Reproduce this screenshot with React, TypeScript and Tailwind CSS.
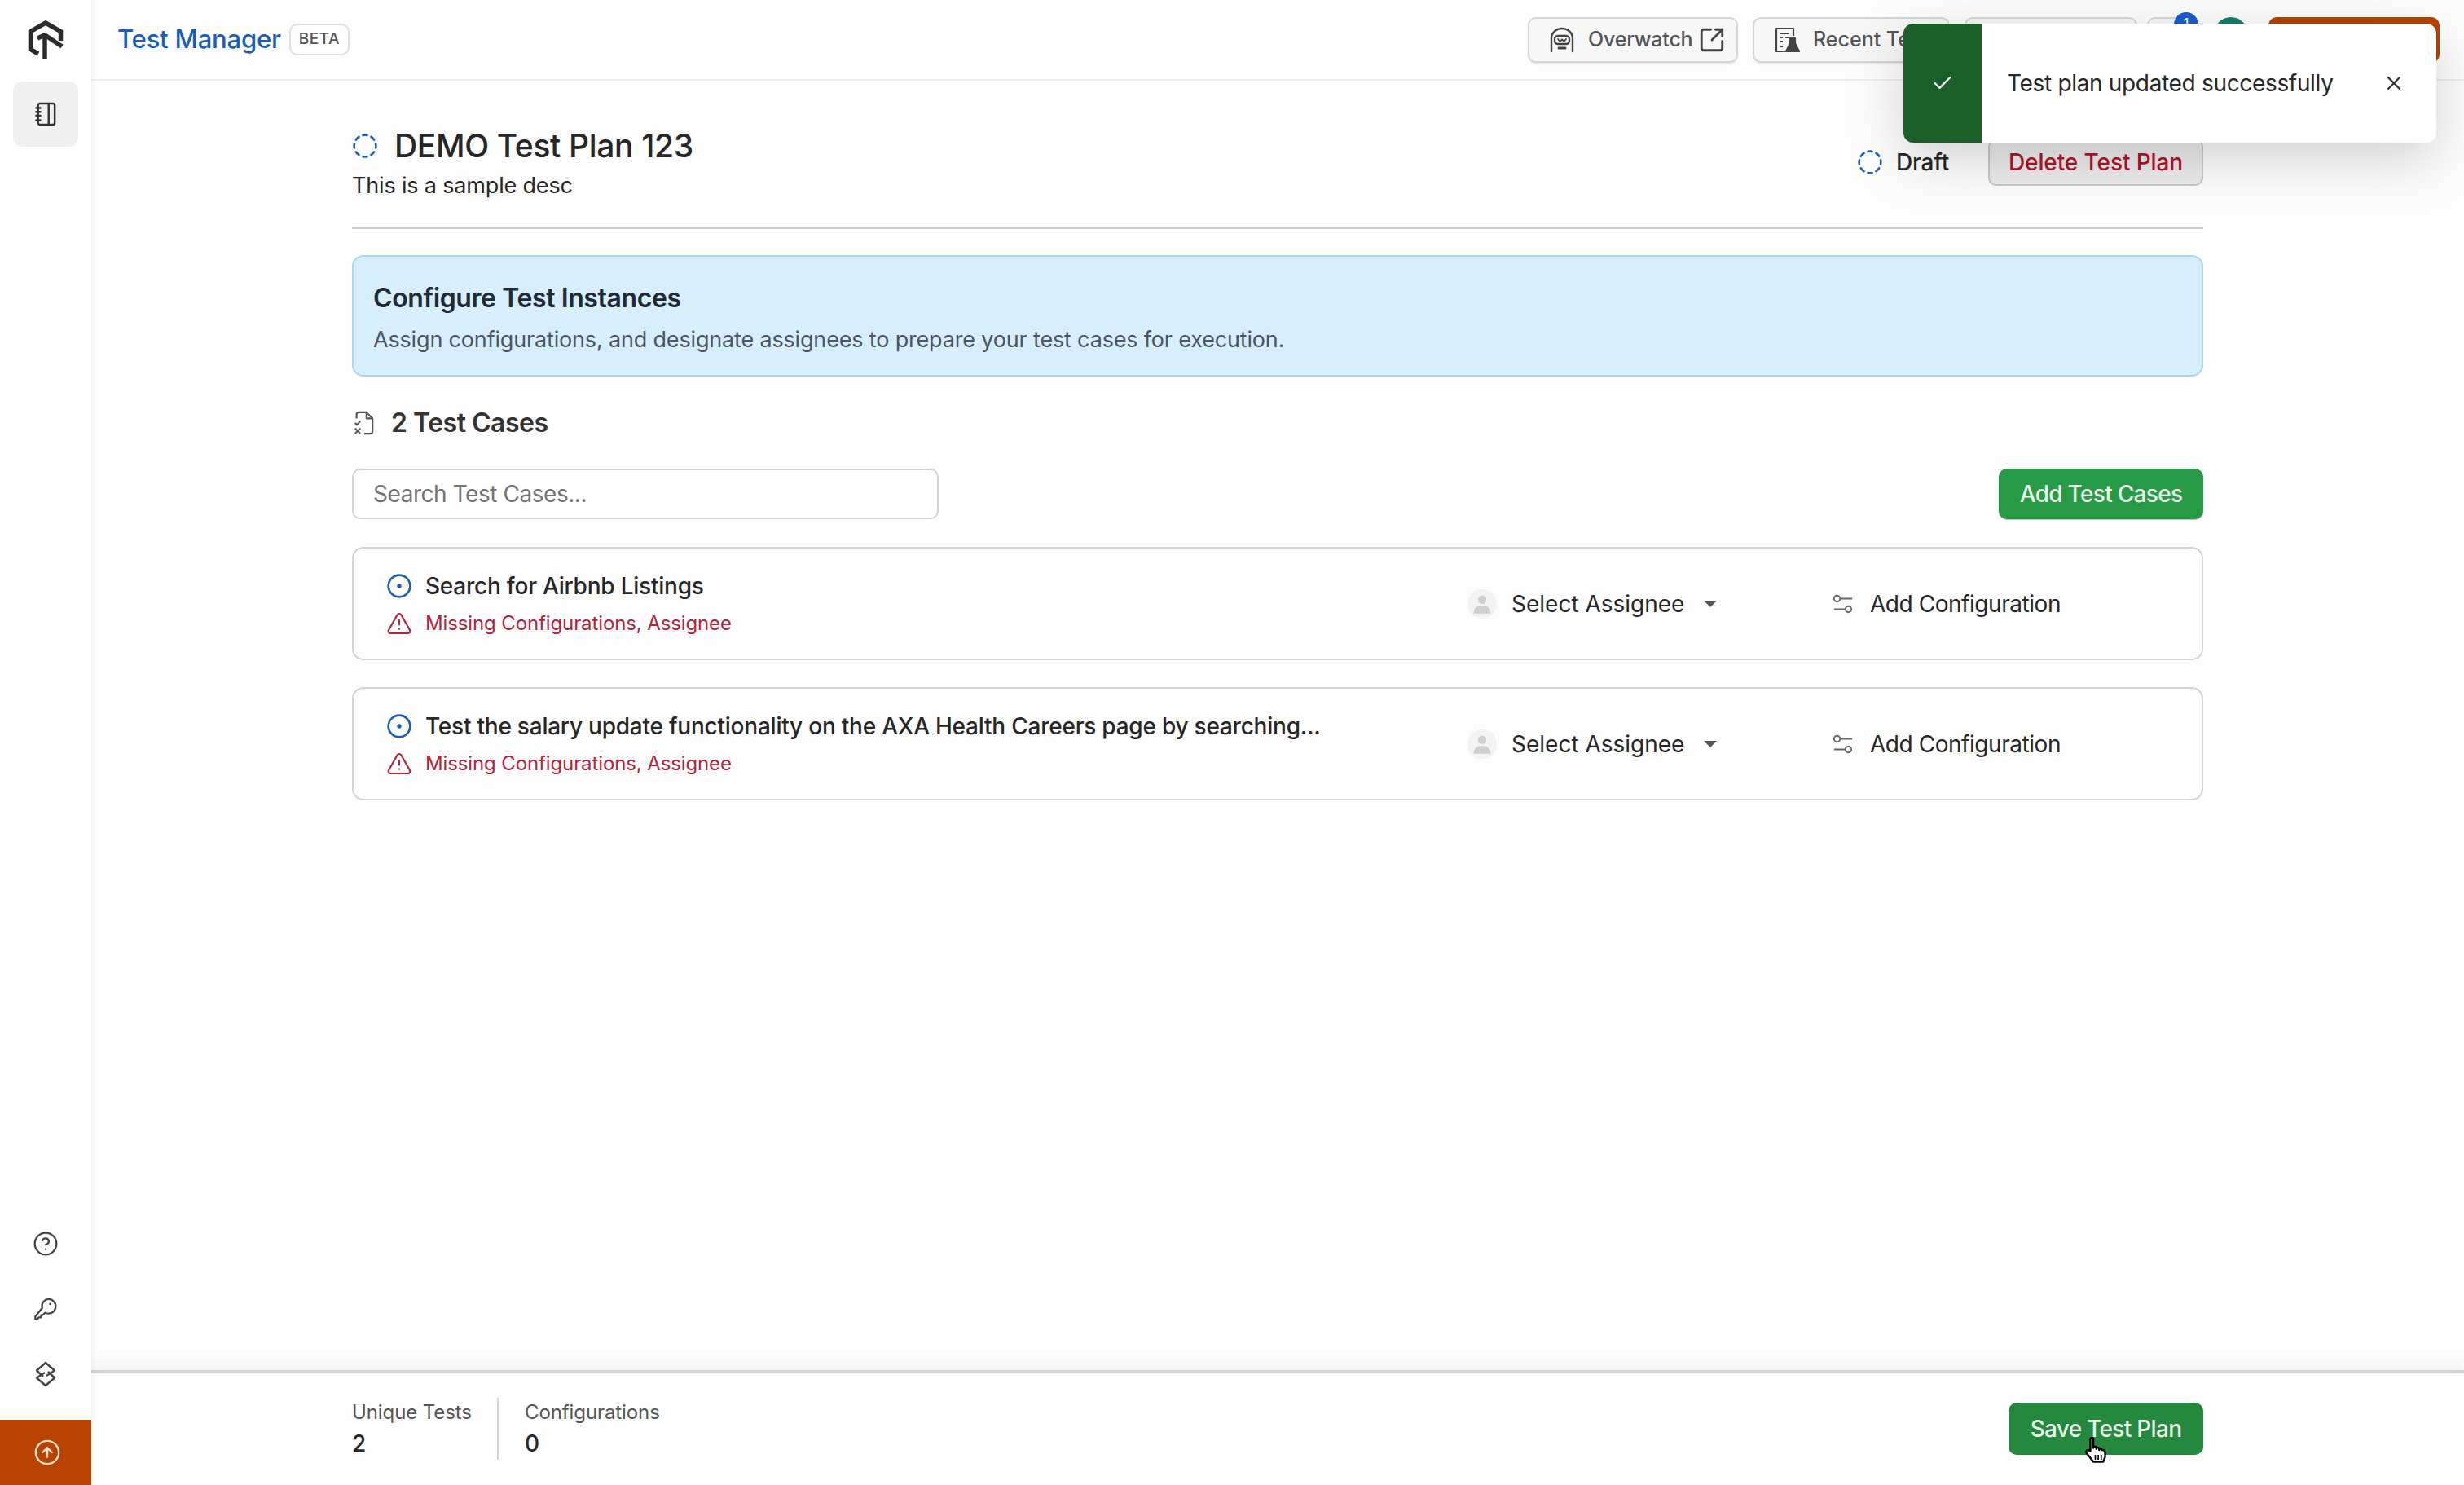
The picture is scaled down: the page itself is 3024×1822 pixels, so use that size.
import { Check, CircleArrowUp, CircleDashed, CircleDot, CircleHelp, SquareArrowOutUpRight, TriangleAlert, X } from 'lucide-react'

const testCases = [
  { id: 1, name: 'Search for Airbnb Listings' },
  { id: 2, name: 'Test the salary update functionality on the AXA Health Careers page by searching...' },
]

function Logo() {
  return (
    <svg viewBox="0 0 44 48" className="h-[48px] w-[44px]" fill="none" stroke="#2b2b2b" strokeWidth="5.5">
      <path d="M13 41 L3.5 35.5 V13.5 L22 3 L40.5 13.5 V25" />
      <path d="M21 47 V20" />
      <path d="M12 22 L21 18 L42 32" />
    </svg>
  )
}

function NotebookIcon() {
  return (
    <svg viewBox="0 0 28 32" className="h-[30px] w-[26px]" fill="none" stroke="#333" strokeWidth="2.6" strokeLinecap="round">
      <rect x="4" y="2" width="22" height="28" rx="2.5" />
      <path d="M18 2 V30" />
      <path d="M1.5 8 H7 M1.5 13 H7 M1.5 18 H7 M1.5 24 H7" />
    </svg>
  )
}

function KeyIcon() {
  return (
    <svg viewBox="0 0 32 32" className="h-[30px] w-[30px]" fill="none" stroke="#444" strokeWidth="2.4" strokeLinejoin="round">
      <path d="M19.5 3 A9.5 9.5 0 1 1 15.5 21 L12 24 H10 V27 H7 L5 29.5 H2.5 V25.5 L11.5 15 A9.5 9.5 0 0 1 19.5 3 Z" />
      <circle cx="22" cy="9.5" r="1.5" fill="#444" stroke="none" />
    </svg>
  )
}

function LinkIcon() {
  return (
    <svg viewBox="0 0 28 32" className="h-[32px] w-[28px]" fill="none" stroke="#444" strokeWidth="2.4" strokeLinejoin="round">
      <path d="M11 19 L3 11.5 L14 2 L25 11.5 L15 18" />
      <path d="M17 13 L25 20.5 L14 30 L3 20.5 L13 14" />
    </svg>
  )
}

function OverwatchIcon() {
  return (
    <svg viewBox="0 0 32 32" className="h-[32px] w-[32px] shrink-0" fill="none" stroke="#444" strokeWidth="2.4" strokeLinecap="round">
      <path d="M3 30 V14 C3 7 9 2 16 2 C23 2 29 7 29 14 V30" />
      <rect x="7" y="11" width="18" height="10" rx="4" />
      <path d="M12 26 H20" strokeWidth="3" />
      <path d="M11 15 L13.5 18 L16 15.5 L18.5 18 L21 15" strokeWidth="1.8" />
    </svg>
  )
}

function RecentIcon() {
  return (
    <svg viewBox="0 0 32 32" className="h-[32px] w-[32px] shrink-0" fill="none" stroke="#444" strokeWidth="2.2" strokeLinejoin="round">
      <path d="M14 30 H3 V2 H24 V11" />
      <path d="M8 8 H19 M8 13 H11 M8 18 H11 M8 24 H11 M14 13 H19" />
      <path d="M20 14 V20 L15 30 H31 L26 20 V14 Z" fill="#444" />
    </svg>
  )
}

function CasesIcon() {
  return (
    <svg viewBox="-2 0 28 32" className="h-[30px] w-[28px]" fill="none" stroke="#555" strokeWidth="2.2" strokeLinejoin="round">
      <path d="M3 10 V5 A3 3 0 0 1 6 2 H16 L24 10 V27 A3 3 0 0 1 21 30 H13" />
      <path d="M16 2 V10 H24" />
      <path d="M1 16 L3.5 18.5 L8 13.5" />
      <path d="M1 23 L8 30 M8 23 L1 30" />
    </svg>
  )
}

function ConfigIcon() {
  return (
    <svg viewBox="0 0 28 28" className="h-[26px] w-[26px]" fill="none" stroke="#666" strokeWidth="2">
      <circle cx="6" cy="7" r="4" />
      <path d="M11 7 H26 M2 21 H17" />
      <circle cx="21" cy="21" r="4" />
    </svg>
  )
}

function PersonIcon() {
  return (
    <div className="flex h-[36px] w-[36px] items-center justify-center rounded-full bg-[#f3f3f3]">
      <svg viewBox="0 0 24 24" className="h-[28px] w-[28px]" fill="#cfcfcf">
        <circle cx="12" cy="7.5" r="4.5" />
        <path d="M3 22 C3 16 7 14 12 14 C17 14 21 16 21 22 Z" />
      </svg>
    </div>
  )
}

function HandCursor() {
  return (
    <svg viewBox="0 0 24 28" className="absolute left-[92px] top-[40px] h-[36px] w-[29px]" fill="#fff" stroke="#000" strokeWidth="2" strokeLinejoin="round">
      <path d="M7 3 C7 1 10 1 10 3 V12 C10 10 13 10 13 12 V13 C13 11 16 11 16 13 V14 C16 12 19 12 19 14 C21 14 22 15 22 17 V21 L20 26 H10 L3 17 C2 15 4 13 7 15 Z" />
      <path d="M12 19 V24 M15 19 V24 M18 19 V24" strokeWidth="1.4" />
    </svg>
  )
}

function TestCaseRow({ name }: { name: string }) {
  return (
    <div className="flex h-[139px] items-center rounded-[14px] border-2 border-[#d4d4d4] pl-[40px]">
      <div className="w-[1327px] shrink-0">
        <div className="flex items-center gap-[16px]">
          <CircleDot className="h-[32px] w-[32px] text-[#1d5fb8]" strokeWidth={2} />
          <span className="text-[28px] font-medium tracking-[-0.23px] text-[#262626]">{name}</span>
        </div>
        <div className="mt-[7px] flex items-center gap-[16px]">
          <TriangleAlert className="h-[32px] w-[32px] text-[#b3243c]" strokeWidth={1.6} />
          <span className="text-[24px] tracking-[-0.12px] text-[#b3243c]">Missing Configurations, Assignee</span>
        </div>
      </div>
      <div className="flex w-[448px] shrink-0 items-center">
        <PersonIcon />
        <span className="ml-[18px] text-[28px] text-[#262626]">Select Assignee</span>
        <span className="ml-[24px] h-0 w-0 border-x-[8px] border-t-[8px] border-x-transparent border-t-[#555]" />
      </div>
      <div className="flex items-center gap-[20px]">
        <ConfigIcon />
        <span className="text-[28px] tracking-[-0.45px] text-[#262626]">Add Configuration</span>
      </div>
    </div>
  )
}

export default function App() {
  return (
    <div className="relative flex h-[1822px] w-[3024px] overflow-hidden bg-[#fdfdfd] font-['Inter',sans-serif]">
      {/* Sidebar */}
      <aside className="z-10 flex w-[112px] shrink-0 flex-col items-center bg-white shadow-[2px_0_6px_rgba(0,0,0,0.05)]">
        <div className="flex h-[98px] items-center justify-center">
          <Logo />
        </div>
        <div className="mt-[2px] flex h-[80px] w-[80px] items-center justify-center rounded-[12px] bg-[#f0f0f0]">
          <NotebookIcon />
        </div>
        <div className="mt-auto flex flex-col items-center gap-[49px] pb-[40px]">
          <CircleHelp className="h-[32px] w-[32px] text-[#444]" strokeWidth={1.7} />
          <KeyIcon />
          <LinkIcon />
        </div>
        <div className="flex h-[80px] w-full items-center justify-center bg-[#b84300]">
          <CircleArrowUp className="ml-[4px] h-[34px] w-[34px] text-[#ffe3d0]" strokeWidth={1.7} />
        </div>
      </aside>

      <div className="flex min-w-0 flex-1 flex-col">
        {/* Top bar */}
        <header className="flex h-[99px] shrink-0 items-center border-b-2 border-[#efefef] pl-[32px] pr-[30px]">
          <span className="text-[31px] font-medium tracking-[-0.2px] text-[#1a5cba]">Test Manager</span>
          <span className="ml-[10px] rounded-[10px] border-2 border-[#e0e0e0] px-[10px] py-[3px] text-[19px] font-medium tracking-[0.5px] text-[#555]">BETA</span>
          <div className="ml-auto flex items-center">
            <div className="flex h-[56px] w-[258px] items-center gap-[16px] rounded-[10px] border-2 border-[#d6d6d6] bg-[#f7f7f7] pl-[24px] shadow-[0_2px_2px_rgba(0,0,0,0.08)]">
              <OverwatchIcon />
              <span className="text-[25px] font-medium tracking-[-0.2px] text-[#555]">Overwatch</span>
              <SquareArrowOutUpRight className="-ml-[9px] h-[34px] w-[34px] shrink-0 text-[#444]" strokeWidth={2} />
            </div>
            <div className="ml-[18px] flex h-[56px] w-[242px] items-center gap-[16px] overflow-hidden rounded-[10px] border-2 border-[#d6d6d6] bg-[#f7f7f7] pl-[24px] shadow-[0_2px_2px_rgba(0,0,0,0.08)]">
              <RecentIcon />
              <span className="whitespace-nowrap text-[25px] font-medium text-[#555]">Recent Tests</span>
            </div>
            <div className="ml-[18px] h-[56px] w-[212px] rounded-[10px] border-2 border-[#d6d6d6] bg-[#f7f7f7]" />
            <div className="relative ml-[12px] h-[56px] w-[56px] rounded-[10px] border-2 border-[#d6d6d6] bg-[#f7f7f7]">
              <span className="absolute -top-[8px] left-[31px] flex h-[30px] w-[30px] items-center justify-center rounded-full bg-[#1a5cd0] text-[18px] text-white">1</span>
            </div>
            <div className="ml-[26px] h-[42px] w-[42px] self-start rounded-full bg-[#12806f]" />
            <div className="ml-[25px] h-[56px] w-[210px] rounded-[10px] bg-[#b84300]" />
          </div>
        </header>

        {/* Page body */}
        <main className="min-h-0 flex-1 px-[320px]">
          <div className="flex h-[182px] items-start border-b-2 border-[#cfcfcf] pt-[56px]">
            <div>
              <div className="flex items-center gap-[20px]">
                <CircleDashed className="h-[32px] w-[32px] text-[#1d5fb8]" strokeWidth={2} />
                <h1 className="text-[39px] leading-[48px] font-medium tracking-[-0.35px] text-[#262626]">DEMO Test Plan 123</h1>
              </div>
              <p className="mt-[6px] text-[27px] leading-[38px] tracking-[-0.17px] text-[#262626]">This is a sample desc</p>
            </div>
            <div className="ml-auto mt-[15px] flex items-center">
              <CircleDashed className="h-[32px] w-[32px] text-[#1d5fb8]" strokeWidth={2} />
              <span className="ml-[16px] text-[28px] font-medium tracking-[-0.2px] text-[#262626]">Draft</span>
              <button className="ml-[48px] flex h-[58px] w-[264px] items-center justify-center rounded-[10px] border-2 border-[#c9c9c9] bg-[#ececec] text-[28px] font-medium tracking-[-0.1px] text-[#b3132b]">
                Delete Test Plan
              </button>
            </div>
          </div>

          <div className="mt-[32px] flex h-[149px] flex-col justify-center rounded-[14px] border-2 border-[#a9d6f3] bg-[#d7effd] px-[24px] pt-[4px]">
            <h2 className="text-[32px] leading-[42px] font-semibold tracking-[-0.4px] text-[#1f2a37]">Configure Test Instances</h2>
            <p className="mt-[12px] text-[27px] leading-[36px] tracking-[-0.17px] text-[#4b5563]">Assign configurations, and designate assignees to prepare your test cases for execution.</p>
          </div>

          <div className="mt-[39px] flex items-center gap-[20px]">
            <CasesIcon />
            <h3 className="text-[32px] leading-[36px] font-semibold tracking-[-0.5px] text-[#333]">2 Test Cases</h3>
          </div>

          <div className="mt-[38px] flex items-center justify-between">
            <div className="flex h-[62px] w-[720px] items-center rounded-[10px] border-2 border-[#d4d4d4] bg-white px-[24px] text-[28px] tracking-[-0.45px] text-[#737373]">
              Search Test Cases...
            </div>
            <button className="h-[62px] w-[251px] rounded-[10px] bg-[#269a44] text-center text-[28px] font-medium tracking-[-0.7px] text-[#e9fbea] shadow-[0_1px_1px_rgba(0,0,0,0.25)]">
              Add Test Cases
            </button>
          </div>

          <div className="mt-[34px] flex flex-col gap-[33px]">
            {testCases.map((tc) => (
              <TestCaseRow key={tc.id} name={tc.name} />
            ))}
          </div>
        </main>

        {/* Footer bar */}
        <footer className="flex h-[141px] shrink-0 items-center border-t-[3px] border-[#d4d4d4] px-[320px] shadow-[0_-10px_14px_rgba(0,0,0,0.04)]">
          <div className="w-[178px]">
            <div className="text-[24px] leading-[32px] tracking-[-0.1px] text-[#555]">Unique Tests</div>
            <div className="mt-[4px] text-[28px] leading-[36px] font-medium text-[#262626]">2</div>
          </div>
          <div className="h-[76px] w-[2px] bg-[#d4d4d4]" />
          <div className="ml-[32px]">
            <div className="text-[24px] leading-[32px] tracking-[-0.1px] text-[#555]">Configurations</div>
            <div className="mt-[4px] text-[28px] leading-[36px] font-medium text-[#262626]">0</div>
          </div>
          <button className="relative ml-auto h-[64px] w-[239px] rounded-[10px] bg-[#25883f] text-center text-[28px] font-medium tracking-[-0.7px] text-[#e9fbea]">
            Save Test Plan
            <HandCursor />
          </button>
        </footer>
      </div>

      {/* Toast */}
      <div className="absolute left-[2336px] top-[29px] z-20 flex h-[146px] w-[654px] overflow-hidden rounded-[12px] bg-white shadow-[0_20px_70px_rgba(0,0,0,0.18)]">
        <div className="flex w-[96px] shrink-0 items-center justify-center bg-[#1a5e2a]">
          <Check className="h-[28px] w-[28px] text-white" strokeWidth={2} />
        </div>
        <div className="flex flex-1 items-center pl-[31px] pr-[38px]">
          <span className="text-[28px] tracking-[-0.33px] text-[#262626]">Test plan updated successfully</span>
          <X className="ml-auto h-[28px] w-[28px] text-[#333]" strokeWidth={2} />
        </div>
      </div>
    </div>
  )
}
